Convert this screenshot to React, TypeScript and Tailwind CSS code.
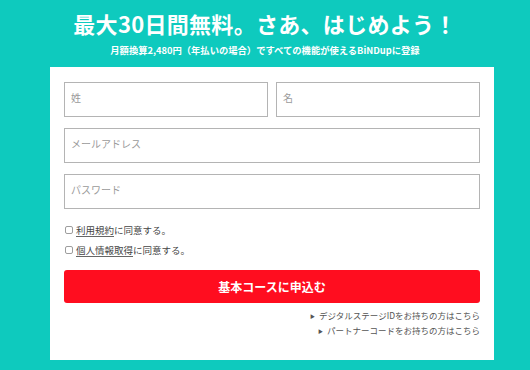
import React from "react";

const font = { fontFamily: '"Noto Sans CJK JP", "Noto Sans", sans-serif' };

function Field({ label }: { label: string }) {
  return (
    <div className="h-[35px] flex-1 border border-[#b4b4b4] bg-white flex items-center px-[6px] pb-[4px]">
      <span className="text-[10px] leading-[14px] text-[#9a9a9a]">{label}</span>
    </div>
  );
}

function Check({ link, rest }: { link: string; rest: string }) {
  return (
    <div className="flex items-center h-[16px]">
      <span className="w-[8px] h-[8px] border border-[#9d9d9d] rounded-[2px] bg-white mr-[3px] ml-[1px]" />
      <span className="text-[9.5px] leading-[16px] text-[#444]">
        <span className="underline underline-offset-2 decoration-[#666]">{link}</span>
        {rest}
      </span>
    </div>
  );
}

export default function App() {
  return (
    <div className="w-[530px] h-[370px] bg-[#0ecabe] overflow-hidden" style={font}>
      <div className="h-[67px] flex flex-col items-center pt-[9px]">
        <div className="text-white font-bold text-[22px] leading-[28px] tracking-[0.3px]">
          最大30日間無料。さあ、はじめよう！
        </div>
        <div className="text-white font-bold text-[9.3px] leading-[14px] mt-[6px]">
          月額換算2,480円（年払いの場合）ですべての機能が使えるBiNDupに登録
        </div>
      </div>
      <div className="mx-[50px] w-[444px] bg-white px-[14px] pt-[15px] pb-[22px]">
        <div className="flex gap-[8px]">
          <Field label="姓" />
          <Field label="名" />
        </div>
        <div className="flex mt-[11px]">
          <Field label="メールアドレス" />
        </div>
        <div className="flex mt-[11px]">
          <Field label="パスワード" />
        </div>
        <div className="mt-[13px] flex flex-col gap-[4px]">
          <Check link="利用規約" rest="に同意する。" />
          <Check link="個人情報取得" rest="に同意する。" />
        </div>
        <button className="mt-[12px] w-full h-[33px] bg-[#ff0d1f] rounded-[3px] text-white font-bold text-[12px] flex items-center justify-center">
          基本コースに申込む
        </button>
        <div className="mt-[5px] flex flex-col items-end text-[8.5px] leading-[15px] text-[#555]">
          <div className="flex items-center">
            <span className="text-[5px] mr-[4px] text-[#555]">▶</span>
            デジタルステージIDをお持ちの方はこちら
          </div>
          <div className="flex items-center">
            <span className="text-[5px] mr-[4px] text-[#555]">▶</span>
            パートナーコードをお持ちの方はこちら
          </div>
        </div>
      </div>
    </div>
  );
}
